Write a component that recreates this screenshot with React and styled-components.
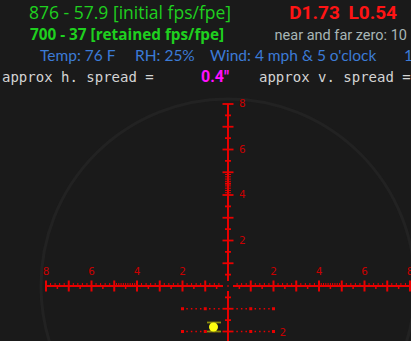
import React from "react";
import styled, { createGlobalStyle } from "styled-components";

const Global = createGlobalStyle`
  html, body { margin: 0; padding: 0; background: #1a1a1a; }
  body { width: 411px; height: 341px; overflow: hidden; }
`;

const Page = styled.div`
  width: 411px;
  height: 341px;
  overflow: hidden;
  background: #1a1a1a;
  display: flex;
  flex-direction: column;
`;

const Row = styled.div`
  display: flex;
  align-items: baseline;
  white-space: nowrap;
  height: ${(p) => p.$h}px;
  line-height: ${(p) => p.$h}px;
  padding-left: ${(p) => p.$pl}px;
  padding-right: ${(p) => p.$pr || 0}px;
`;

const Green = styled.span`
  font-family: "Open Sans", "Noto Sans", sans-serif;
  color: #1fd01f;
  font-size: ${(p) => p.$size}px;
  font-weight: ${(p) => (p.$bold ? 700 : 400)};
`;

const RedStats = styled.span`
  margin-left: auto;
  font-family: Roboto, "Liberation Sans", sans-serif;
  font-weight: 700;
  font-size: 19px;
  color: #ff1414;
  word-spacing: 4px;
`;

const Zero = styled.span`
  margin-left: auto;
  font-family: Roboto, sans-serif;
  font-size: 14.5px;
  color: #a8b6b6;
`;

const Env = styled.span`
  font-family: Lato, "Noto Sans", sans-serif;
  font-size: 15.5px;
  color: #3c7bd6;
  width: ${(p) => (p.$w ? `${p.$w}px` : "auto")};
  flex: none;
`;

const Mono = styled.span`
  font-family: "DejaVu Sans Mono", "Liberation Mono", monospace;
  font-size: 14px;
  color: #d4d4d4;
  width: ${(p) => (p.$w ? `${p.$w}px` : "auto")};
  flex: none;
`;

const Spread = styled.span`
  font-family: Roboto, sans-serif;
  font-weight: 700;
  font-size: 16px;
  color: #ff10ff;
  width: ${(p) => p.$w}px;
  flex: none;
`;

const Scope = styled.svg`
  display: block;
  flex: none;
`;

const RED = "#e80000";
const LBL = "#c80000";
const CX = 228;
const CY = 286;
const U = 22.75;

function Reticle() {
  const els = [];
  let k = 0;
  const line = (x1, y1, x2, y2, w = 2, c = RED) =>
    els.push(<line key={k++} x1={x1} y1={y1} x2={x2} y2={y2} stroke={c} strokeWidth={w} />);
  const rect = (x, y, w, h, c = RED) =>
    els.push(<rect key={k++} x={x} y={y} width={w} height={h} fill={c} />);
  const text = (x, y, s, anchor = "middle") =>
    els.push(
      <text
        key={k++}
        x={x}
        y={y}
        fill={LBL}
        fontSize="11"
        fontFamily="'DejaVu Sans Mono', monospace"
        textAnchor={anchor}
        dominantBaseline="middle"
      >
        {s}
      </text>
    );

  // horizontal bar
  line(CX - 8 * U, CY, CX - 5, CY);
  line(CX + 5, CY, 420, CY);
  for (let side of [-1, 1]) {
    for (let i = 1; i <= 8; i++) {
      const x = CX + side * i * U;
      line(x, CY - 5.5, x, CY + 5.5);
      if (i % 2 === 0) text(x, CY - 14, String(i));
    }
    for (let i = 0; i < 8; i++) {
      const dense = i === 4;
      const step = dense ? 0.1 : 0.2;
      for (let f = step; f < 0.999; f += step) {
        const x = CX + side * (i + f) * U;
        if (Math.abs(x - CX) < 6) continue;
        line(x, CY - 3, x, CY, 1);
      }
      const xh = CX + side * (i + 0.5) * U;
      if (Math.abs(xh - CX) > 6) line(xh, CY, xh, CY + 3, 1.5);
    }
  }

  // vertical bar
  line(CX, CY - 8 * U, CX, CY - 5);
  line(CX, CY + 5, CX, 345);
  for (let h = 0.5; h <= 8.01; h += 0.5) {
    const y = CY - h * U;
    const whole = Math.abs(h - Math.round(h)) < 0.01;
    if (whole) line(CX - 5.5, y, CX + 5.5, y, 1.8);
    else line(CX - 3, y, CX + 3, y, 1.8);
    if (whole && Math.round(h) % 2 === 0) text(CX + 11, y, String(Math.round(h)), "start");
  }
  for (let f = 4.1; f < 4.95; f += 0.1) {
    const y = CY - f * U;
    line(CX - 3, y, CX + 3, y, 1);
  }
  for (let h = 0.5; h <= 2.01; h += 0.5) {
    const y = CY + h * U;
    const whole = Math.abs(h - Math.round(h)) < 0.01;
    if (whole) line(CX - 5.5, y, CX + 5.5, y, 1.8);
    else line(CX - 3, y, CX + 3, y, 1.8);
  }
  rect(CX - 0.75, CY - 0.75, 1.5, 1.5);

  // dotted hold lines
  for (let row = 1; row <= 2; row++) {
    const y = CY + row * U;
    for (let n = -10; n <= 10; n++) {
      const x = CX + n * 0.2 * U;
      if (Math.abs(x - CX) < 8) continue;
      if (n % 5 === 0) rect(x - 1.5, y - 1.5, 3, 3);
      else rect(x - 0.75, y - 0.75, 1.5, 1.5);
    }
  }
  text(CX + 2 * U + 6, CY + 2 * U + 1, "2", "start");

  return (
    <Scope width="411" height="253" viewBox="0 88 411 253">
      <circle cx={CX} cy={CY} r="187" fill="none" stroke="#222222" strokeWidth="3" />
      {els}
      <g>
        <line x1="207" y1="322.5" x2="221" y2="322.5" stroke="#8a8a0c" strokeWidth="1.8" />
        <line x1="207" y1="331.5" x2="221" y2="331.5" stroke="#8a8a0c" strokeWidth="1.8" />
        <line x1="213.5" y1="322.5" x2="213.5" y2="331.5" stroke="#8a8a0c" strokeWidth="1.5" />
        <circle cx="213.5" cy="327" r="4.5" fill="#ffff10" />
      </g>
    </Scope>
  );
}

export default function App() {
  return (
    <Page>
      <Global />
      <Row $h={24} $pl={29} $pr={14}>
        <Green $size={17.5}>876 - 57.9 [initial fps/fpe]</Green>
        <RedStats>D1.73 L0.54</RedStats>
      </Row>
      <Row $h={21} $pl={30} $pr={4}>
        <Green $size={15.3} $bold>700 - 37 [retained fps/fpe]</Green>
        <Zero>near and far zero: 10</Zero>
      </Row>
      <Row $h={21} $pl={40}>
        <Env $w={95}>Temp: 76 F</Env>
        <Env $w={75}>RH: 25%</Env>
        <Env $w={194}>Wind: 4 mph &amp; 5 o'clock</Env>
        <Env>1</Env>
      </Row>
      <Row $h={22} $pl={2}>
        <Mono $w={199}>approx h. spread =</Mono>
        <Spread $w={58}>0.4"</Spread>
        <Mono>approx v. spread =</Mono>
      </Row>
      <Reticle />
    </Page>
  );
}
